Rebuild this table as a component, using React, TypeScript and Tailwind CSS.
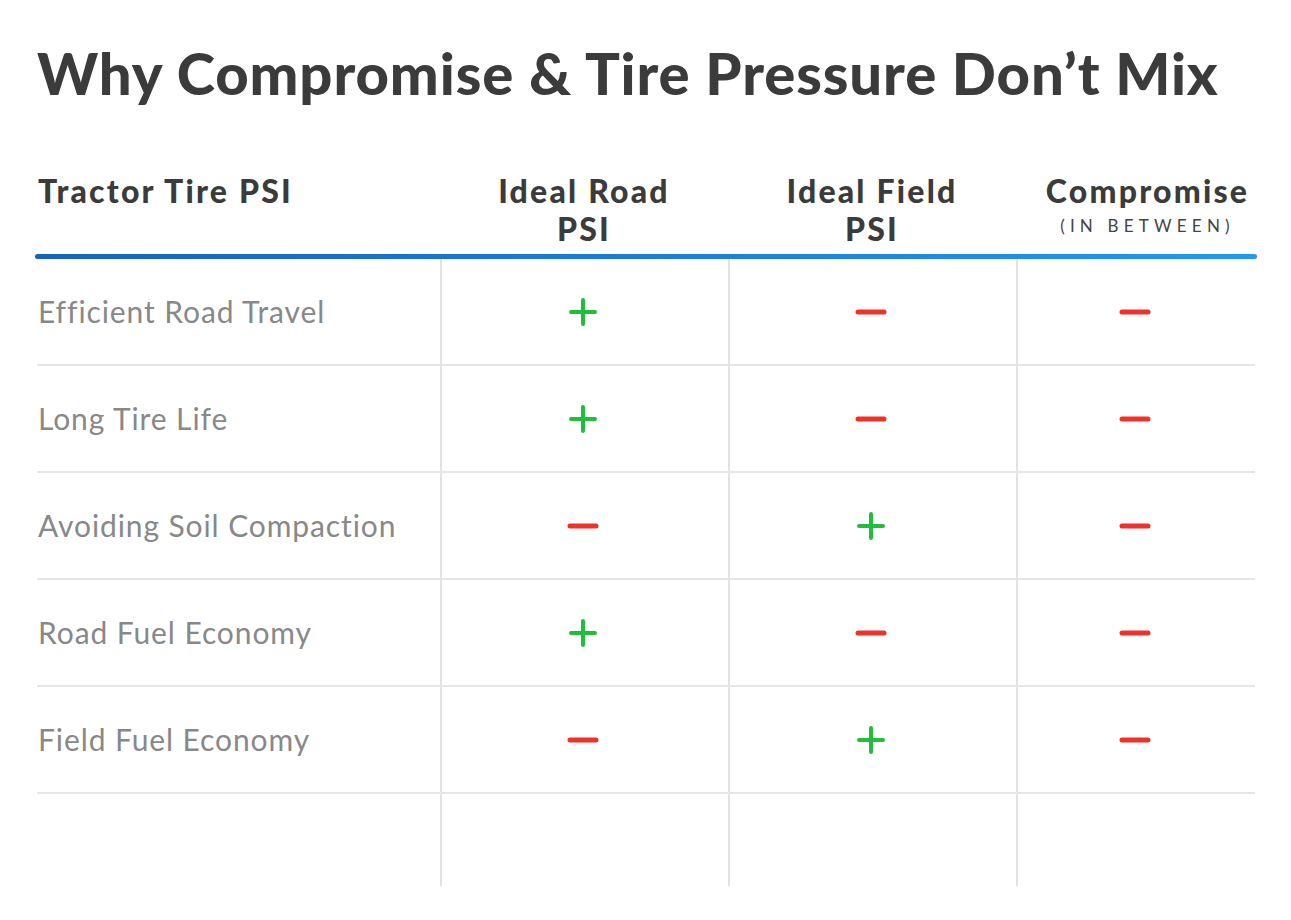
const rows: { label: string; vals: ("+" | "-")[] }[] = [
  { label: "Efficient Road Travel", vals: ["+", "-", "-"] },
  { label: "Long Tire Life", vals: ["+", "-", "-"] },
  { label: "Avoiding Soil Compaction", vals: ["-", "+", "-"] },
  { label: "Road Fuel Economy", vals: ["+", "-", "-"] },
  { label: "Field Fuel Economy", vals: ["-", "+", "-"] },
];

const Mark = ({ v }: { v: "+" | "-" }) =>
  v === "+" ? (
    <svg width="28" height="28" viewBox="0 0 28 28">
      <path d="M14 2v24M2 14h24" stroke="#1fbf3a" strokeWidth="4" strokeLinecap="round" />
    </svg>
  ) : (
    <svg width="32" height="8" viewBox="0 0 32 8">
      <path d="M3 4h26" stroke="#f2302a" strokeWidth="5" strokeLinecap="round" />
    </svg>
  );

const App = () => {
  return (
    <div className="min-h-screen w-full bg-white font-['Lato','Liberation_Sans',sans-serif]">
      <div className="ml-[37px] w-[1220px] pt-[44px]">
        <h1 className="whitespace-nowrap text-[58px] font-black leading-none tracking-[0.9px] text-[#3b3b3b]">
          Why Compromise &amp; Tire Pressure Don’t Mix
        </h1>

        {/* header */}
        <div className="mt-[70px] grid grid-cols-[403px_288px_288px_1fr] text-[32px] font-black leading-[38px] tracking-[2.2px] text-[#3b3b3b]">
          <div className="pl-[1px]">Tractor Tire PSI</div>
          <div className="text-center">
            Ideal Road
            <br />
            PSI
          </div>
          <div className="text-center">
            Ideal Field
            <br />
            PSI
          </div>
          <div className="flex flex-col items-center pl-[22px]">
            <span className="whitespace-nowrap">Compromise</span>
            <span className="mt-[6px] whitespace-nowrap text-[17px] font-normal leading-[20px] tracking-[5.2px] text-[#444]">(IN BETWEEN)</span>
          </div>
        </div>
        <div className="mt-[6px] h-[5px] w-[1222px] -ml-[2px] rounded-full bg-gradient-to-r from-[#1762bf] to-[#2299f0]" />

        {/* body */}
        <div className="w-[1218px]">
          {rows.map((r) => (
            <div
              key={r.label}
              className="grid h-[107px] grid-cols-[403px_288px_288px_1fr] border-b-2 border-[#e6e6e6]"
            >
              <div className="flex items-center pl-[1px] text-[30px] tracking-[0.9px] text-[#888888]">{r.label}</div>
              {r.vals.map((v, i) => (
                <div key={i} className="flex items-center justify-center border-l-2 border-[#e3e3e3] pr-[4px]">
                  <Mark v={v} />
                </div>
              ))}
            </div>
          ))}
          <div className="grid h-[92px] grid-cols-[403px_288px_288px_1fr]">
            <div />
            <div className="border-l-2 border-[#e3e3e3]" />
            <div className="border-l-2 border-[#e3e3e3]" />
            <div className="border-l-2 border-[#e3e3e3]" />
          </div>
        </div>
      </div>
    </div>
  );
};

export default App;
